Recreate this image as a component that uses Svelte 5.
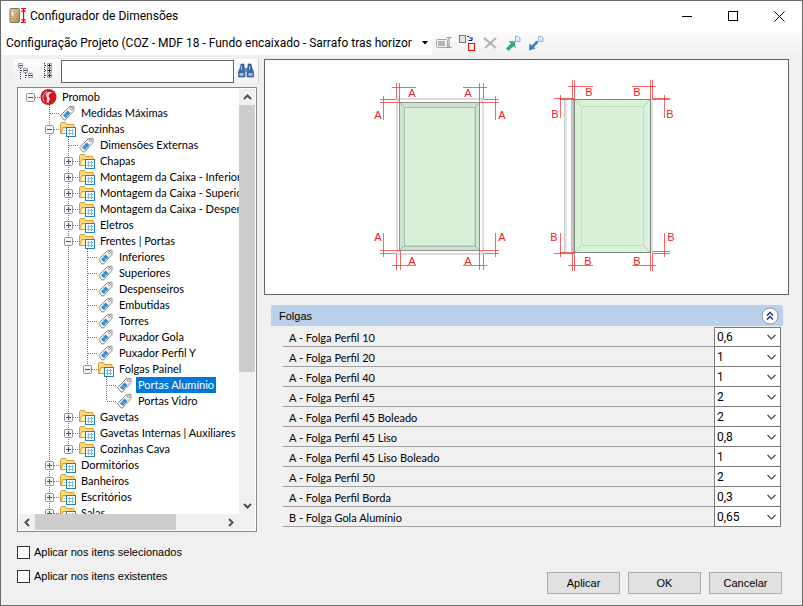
<script lang="ts">
  type Item = {
    depth: number;
    icon: 'root' | 'folder' | 'tag';
    label: string;
    open?: boolean;
  };

  const items: Item[] = [
    { depth: 0, icon: 'root', label: 'Promob', open: true },
    { depth: 1, icon: 'tag', label: 'Medidas Máximas' },
    { depth: 1, icon: 'folder', label: 'Cozinhas', open: true },
    { depth: 2, icon: 'tag', label: 'Dimensões Externas' },
    { depth: 2, icon: 'folder', label: 'Chapas', open: false },
    { depth: 2, icon: 'folder', label: 'Montagem da Caixa - Inferior', open: false },
    { depth: 2, icon: 'folder', label: 'Montagem da Caixa - Superior', open: false },
    { depth: 2, icon: 'folder', label: 'Montagem da Caixa - Despenseiro', open: false },
    { depth: 2, icon: 'folder', label: 'Eletros', open: false },
    { depth: 2, icon: 'folder', label: 'Frentes | Portas', open: true },
    { depth: 3, icon: 'tag', label: 'Inferiores' },
    { depth: 3, icon: 'tag', label: 'Superiores' },
    { depth: 3, icon: 'tag', label: 'Despenseiros' },
    { depth: 3, icon: 'tag', label: 'Embutidas' },
    { depth: 3, icon: 'tag', label: 'Torres' },
    { depth: 3, icon: 'tag', label: 'Puxador Gola' },
    { depth: 3, icon: 'tag', label: 'Puxador Perfil Y' },
    { depth: 3, icon: 'folder', label: 'Folgas Painel', open: true },
    { depth: 4, icon: 'tag', label: 'Portas Alumínio' },
    { depth: 4, icon: 'tag', label: 'Portas Vidro' },
    { depth: 2, icon: 'folder', label: 'Gavetas', open: false },
    { depth: 2, icon: 'folder', label: 'Gavetas Internas | Auxiliares', open: false },
    { depth: 2, icon: 'folder', label: 'Cozinhas Cava', open: false },
    { depth: 1, icon: 'folder', label: 'Dormitórios', open: false },
    { depth: 1, icon: 'folder', label: 'Banheiros', open: false },
    { depth: 1, icon: 'folder', label: 'Escritórios', open: false },
    { depth: 1, icon: 'folder', label: 'Salas', open: false },
    { depth: 1, icon: 'folder', label: 'Lavanderias', open: false }
  ];

  const gaps = [
    { label: 'A - Folga Perfil 10', value: '0,6' },
    { label: 'A - Folga Perfil 20', value: '1' },
    { label: 'A - Folga Perfil 40', value: '1' },
    { label: 'A - Folga Perfil 45', value: '2' },
    { label: 'A - Folga Perfil 45 Boleado', value: '2' },
    { label: 'A - Folga Perfil 45 Liso', value: '0,8' },
    { label: 'A - Folga Perfil 45 Liso Boleado', value: '1' },
    { label: 'A - Folga Perfil 50', value: '2' },
    { label: 'A - Folga Perfil Borda', value: '0,3' },
    { label: 'B - Folga Gola Alumínio', value: '0,65' }
  ];

  const marksA = [[412, 97], [468, 97], [378, 119], [502, 119], [378, 241], [502, 241], [412, 265], [468, 265]];
  const marksB = [[589, 96], [637, 96], [555, 118], [670, 118], [554, 241], [671, 241], [588, 265], [637, 265]];

  let selected = $state('Portas Alumínio');
  let collapsed = $state(false);

  // is there a later sibling on this level, so the guide line goes on?
  function continues(index: number, depth: number) {
    for (let i = index + 1; i < items.length; i++) {
      if (items[i].depth < depth) return false;
      if (items[i].depth === depth) return true;
    }
    return false;
  }
</script>

<div class="window">
  <header class="titlebar">
    <svg class="app-icon" width="18" height="18" viewBox="0 0 18 18">
      <defs>
        <linearGradient id="wood" x1="0" y1="0" x2="1" y2="1">
          <stop offset="0" stop-color="#e6d0ae" />
          <stop offset="1" stop-color="#ad8452" />
        </linearGradient>
      </defs>
      <rect x="1" y="1.5" width="9.5" height="14" rx="1" fill="url(#wood)" stroke="#8e714a" />
      <path d="M3.5 5v4" stroke="#f4f4f4" stroke-width="1.5" />
      <path d="M12 1.5h5M12 15.500h5M14.500 2v13M12.500 5l2-2.500 2 2.500M12.500 12l2 2.500 2-2.500" fill="none" stroke="#d8131f" stroke-width="1.200" />
    </svg>
    <h1>Configurador de Dimensões</h1>
    <div class="caption">
      <button aria-label="Minimizar"><svg width="11" height="11"><path d="M0 5.500h10" stroke="#000" /></svg></button>
      <button aria-label="Maximizar"><svg width="11" height="11"><rect x="0.500" y="0.500" width="9" height="9" fill="none" stroke="#000" /></svg></button>
      <button aria-label="Fechar"><svg width="11" height="11"><path d="M0.500 0.500l10 10M10.500 0.500l-10 10" stroke="#000" /></svg></button>
    </div>
  </header>

  <div class="toolbar">
    <div class="project">
      <select aria-label="Configuração">
        <option>Configuração Projeto (COZ - MDF 18 - Fundo encaixado - Sarrafo tras horizontal)</option>
      </select>
      <svg width="7" height="4" viewBox="0 0 7 4"><path d="M0 0h6L3 3.500z" fill="#000" /></svg>
    </div>
    <button aria-label="Renomear">
      <svg width="16" height="16" viewBox="0 0 16 16" fill="none" stroke="#a6a6a6">
        <rect x="0.500" y="4.500" width="11" height="8" rx="1" fill="#f2f2f2" />
        <rect x="2" y="6" width="7" height="5" fill="#b4b4b4" stroke="none" />
        <path d="M10.500 2.500h2l.5 1 .5-1h2M13 3v9M10.500 12.500h2l.5-1 .5 1h2" stroke="#8e8e8e" />
      </svg>
    </button>
    <button aria-label="Duplicar">
      <svg width="16" height="16" viewBox="0 0 16 16" fill="none">
        <rect x="0.500" y="0.500" width="6" height="7" fill="#e4e4e4" stroke="#777" />
        <path d="M8 1.500h2l3 3M13 2v3.500h-3.500" stroke="#16167c" />
        <rect x="9.500" y="8.500" width="6" height="7" fill="#e9e9e9" stroke="#f00c0c" />
      </svg>
    </button>
    <button aria-label="Excluir">
      <svg width="16" height="16" viewBox="0 0 16 16"><path d="M2 3l12 10M14 3L3 13" stroke="#b4b4b4" stroke-width="2.200" /></svg>
    </button>
    <button aria-label="Exportar">
      <svg width="16" height="16" viewBox="0 0 16 16">
        <path d="M10.500 1.500h3l1.500 1.500v3.500h-4.500z" fill="#e4eefb" stroke="#8fb2dc" />
        <path d="M3.500 6l6.500.5.5 6.500-2-2-5 5L1 13.500l5-5z" fill="#35a77c" />
      </svg>
    </button>
    <button aria-label="Importar">
      <svg width="16" height="16" viewBox="0 0 16 16">
        <path d="M10.500 1.500h3l1.500 1.500v3.500h-4.500z" fill="#e4eefb" stroke="#8fb2dc" />
        <path d="M8.500 5.500l2 2-4.500 4.500 1.500 1.500-6.500 2 .5-7 2.500 2z" fill="#3d7fce" />
      </svg>
    </button>
  </div>

  <main>
    <section class="side">
      <div class="search">
        <button aria-label="Recolher tudo">
          <svg width="16" height="16" viewBox="0 0 16 16" fill="none">
            <path d="M2.500 5v11M7.500 10v6M3 7.500h3M8 12.500h3" stroke="#333" stroke-dasharray="1 1" />
            <path d="M0.500 0.500h4v4h-4zM5.500 5.500h4v4h-4zM10.500 10.500h4v4h-4z" fill="#fff" stroke="#9aa0a8" />
            <path d="M1 2.500h3M6 7.500h3M11 12.500h3" stroke="#2c4270" />
          </svg>
        </button>
        <button aria-label="Expandir tudo">
          <svg width="16" height="16" viewBox="0 0 16 16" fill="none">
            <path d="M3.500 0v16M4 2.500h3M4 7.500h3M4 12.500h3" stroke="#333" stroke-dasharray="1 1" />
            <path d="M6.500 0.500h4v4h-4zM6.500 5.500h4v4h-4zM6.500 10.500h4v4h-4z" fill="#fff" stroke="#9aa0a8" />
            <path d="M7 2.500h3M7 7.500h3M7 12.500h3M8.500 1v3M8.500 6v3M8.500 11v3" stroke="#222" />
          </svg>
        </button>
        <input type="text" aria-label="Localizar" />
        <button class="find" aria-label="Procurar">
          <svg width="16" height="16" viewBox="0 0 16 16">
            <path d="M3 1h3v3l1 2v8H0.500v-5L2.500 4zM10 1h3l.5 3 2 5v5H9V6l1-2z" fill="#3b66a8" stroke="#23477f" stroke-width="0.600" />
            <path d="M6.500 5h3v4h-3z" fill="#5f88c4" />
            <path d="M1.500 10h4v3h-4zM10.500 10h4v3h-4z" fill="#9cbce6" />
            <path d="M3.500 3v4M11.500 3v4" stroke="#a9c6ec" />
          </svg>
        </button>
      </div>

      <div class="tree">
        <ul role="tree" aria-label="Dimensões">
          {#each items as item, i}
            <li role="treeitem" aria-selected={item.label === selected}>
              {#each Array(item.depth + 1) as _, level}
                {@const own = level === item.depth}
                {@const more = continues(i, level)}
                <svg class="cell" width="19" height="16" viewBox="0 0 19 16">
                  {#if more}
                    <path class="guide" d="M9.500 0v16" />
                  {:else if own && level > 0}
                    <path class="guide" d="M9.500 0v8" />
                  {/if}
                  {#if own}
                    <path class="guide" d="M10 8.500h9" />
                  {/if}
                  {#if own && item.open !== undefined}
                    <rect x="5.500" y="4.500" width="8" height="8" rx="1" fill="#f6f6f6" stroke="#919191" />
                    <path d={item.open ? 'M7 8.500h5' : 'M7 8.500h5M9.500 6v5'} stroke="#34549a" />
                  {/if}
                </svg>
              {/each}
              {#if item.icon === 'root'}
                <svg width="18" height="16" viewBox="0 0 18 16">
                  <circle cx="8.500" cy="8" r="8" fill="#d4141e" />
                  <path d="M4.500 12.500C1.500 9 3 4 7 2.500" fill="none" stroke="#f0b4b6" />
                  <path d="M5.500 6C6 3 10 2 12.500 4l-3 .5-1 3 1.500 2-1.500 4.500-2-.5.5-4.500z" fill="#f8e4e4" />
                </svg>
              {:else if item.icon === 'folder'}
                <svg width="18" height="16" viewBox="0 0 18 16">
                  <path d="M1.500 12.500v-10l1-1h4l1.500 2h7v9z" fill="#f9d983" stroke="#d79a34" />
                  <path d="M1.500 12.500l2.500-6h5v6z" fill="#fdeeb8" stroke="#d79a34" />
                  <rect x="7.500" y="6.500" width="9" height="9" fill="#fff" stroke="#1b82bd" />
                  <path d="M9 9.500h6M9 12.500h6M10.500 8v6M13.500 8v6" stroke="#8fb7d6" />
                </svg>
              {:else}
                <svg width="18" height="16" viewBox="0 0 18 16">
                  <path d="M1.500 10.500l8.500-8.500 4.500-1 .5.500v4l-8.500 9.500h-1.500z" fill="#f3f3f3" stroke="#8b8b8b" />
                  <path d="M4 10.500l4.500-5 3 2.500-4.500 5z" fill="#2f8fd0" />
                  <path d="M6 8.500l3 2.500" stroke="#86c0e8" stroke-width="0.800" />
                  <circle cx="12.500" cy="3.500" r="1.200" fill="#fff" stroke="#777" stroke-width="0.800" />
                </svg>
              {/if}
              <button class="label" class:selected={item.label === selected} onclick={() => (selected = item.label)}>
                {item.label}
              </button>
            </li>
          {/each}
        </ul>
        <div class="bar vertical">
          <button aria-label="Para cima"><svg width="9" height="6"><path d="M1 5l3.500-3.500L8 5" /></svg></button>
          <div class="track"><div class="thumb"></div></div>
          <button aria-label="Para baixo"><svg width="9" height="6"><path d="M1 1l3.500 3.500L8 1" /></svg></button>
        </div>
        <div class="bar horizontal">
          <button aria-label="Para a esquerda"><svg width="6" height="9"><path d="M5 1L1.500 4.500 5 8" /></svg></button>
          <div class="track"><div class="thumb"></div></div>
          <button aria-label="Para a direita"><svg width="6" height="9"><path d="M1 1l3.500 3.500L1 8" /></svg></button>
        </div>
        <div class="corner"></div>
      </div>

      <div class="checks">
        <label><input type="checkbox" />Aplicar nos itens selecionados</label>
        <label><input type="checkbox" />Aplicar nos itens existentes</label>
      </div>
    </section>

    <section class="content">
      <div class="preview">
        <svg width="100%" height="234" viewBox="265 60 523 234" fill="none">
          <rect x="397" y="99" width="86" height="155" stroke="#dcdcdc" stroke-width="2" />
          <path d="M396 98l4 4M484 98l-4 4M396 255l4-4M484 255l-4-4" stroke="#ccc" />
          <rect x="399.500" y="102.500" width="80" height="148" fill="#cde5cf" stroke="#8d918d" />
          <rect x="404.500" y="107.500" width="71" height="139" fill="#d9f0d9" stroke="#a9bfab" />
          <path d="M474.500 108v138M405 245.500h69" stroke="#c0d6c1" />
          <path d="M400 103l5 5M479 103l-5 5M400 250l5-5M479 250l-5-5" stroke="#a4b5a5" />

          <path d="M564.500 98v155M571.500 98v155" stroke="#c8c8c8" />
          <path d="M566 98v155" stroke="#e6e6e6" stroke-width="2" />
          <path d="M573 98v155" stroke="#bcbcbc" stroke-width="2" />
          <path d="M652 98v155" stroke="#e2e2e2" stroke-width="2" />
          <rect x="574.500" y="99.500" width="76" height="153" fill="#d9f0d9" stroke="#7e857e" />
          <rect x="581.500" y="106.500" width="62" height="139" stroke="#c3dcc4" />
          <path d="M575 100l6 6M650 100l-6 6M575 252l6-6M650 252l-6-6" stroke="#b9d0ba" />

          <g class="measure">
            <path d="M396.500 83v16M399.500 83v19M392 87.500h24M479.500 83v19M483.500 83v16M463 87.500h24" />
            <path d="M380 99.500h16M380 102.500h20M383.500 96v24M484 99.500h15M480 102.500h19M495.500 96v24" />
            <path d="M380 250.500h20M380 253.500h16M383.500 233v24M480 250.500h19M484 253.500h15M495.500 233v24" />
            <path d="M396.500 254v16M400.500 251v19M392 265.500h24M479.500 251v19M483.500 254v16M463 265.500h24" />
            <path d="M572.500 80v18M574.500 80v19M568 86.500h25M650.500 80v19M652.500 80v18M632 86.500h24" />
            <path d="M554 98.500h20M560 99.500h14M560.500 95v23M652 98.500h18M652 99.500h18M664.500 95v23" />
            <path d="M554 253.500h20M560 252.500h14M560.500 233v24M652 251.500h18M652 253.500h18M664.500 233v24" />
            <path d="M572.500 253v18M574.500 253v18M568 265.500h25M650.500 253v18M652.500 253v18M632 265.500h24" />
          </g>
          {#each marksA as [x, y]}
            <text {x} {y}>A</text>
          {/each}
          {#each marksB as [x, y]}
            <text {x} {y}>B</text>
          {/each}
        </svg>
      </div>

      <div class="group">
        <h2>Folgas</h2>
        <button aria-label="Recolher grupo" onclick={() => (collapsed = !collapsed)}>
          <svg width="18" height="18" viewBox="0 0 18 18" fill="none">
            <circle cx="9" cy="9" r="8" fill="#fdfdfe" stroke="#8e97ac" />
            <path d="M6 8.500l3-3 3 3M6 12.500l3-3 3 3" stroke="#1d2c66" stroke-width="1.400" />
          </svg>
        </button>
      </div>
      {#if !collapsed}
        <div class="fields">
          {#each gaps as gap, i}
            <div class="field">
              <label for="gap-{i}">{gap.label}</label>
              <div class="combo">
                <select id="gap-{i}"><option>{gap.value}</option></select>
                <svg width="9" height="6"><path d="M0.500 1l4 4 4-4" fill="none" stroke="#444" stroke-width="1.200" /></svg>
              </div>
            </div>
          {/each}
        </div>
      {/if}

      <div class="actions">
        <button>Aplicar</button>
        <button>OK</button>
        <button>Cancelar</button>
      </div>
    </section>
  </main>
</div>

<style>
  :global(body) {
    margin: 0;
  }

  .window {
    box-sizing: border-box;
    display: flex;
    flex-direction: column;
    height: 100vh;
    border: 1px solid #6b6b6b;
    background: #f0f0f0;
    color: #000;
    font-family: "Liberation Sans", Arial, sans-serif;
    font-size: 11px;
  }

  button,
  select,
  input {
    margin: 0;
    padding: 0;
    font: inherit;
    color: inherit;
  }

  button {
    display: flex;
    align-items: center;
    justify-content: center;
    border: 0;
    background: none;
  }

  svg {
    display: block;
    flex-shrink: 0;
  }

  select {
    appearance: none;
    border: 0;
    border-radius: 0;
    background: none;
    outline: none;
  }

  /* title bar */
  .titlebar {
    display: flex;
    align-items: center;
    height: 30px;
    padding-left: 8px;
    background: #fff;
  }

  h1 {
    flex: 1;
    margin: 0 0 0 3px;
    font-family: Roboto, sans-serif;
    font-size: 12px;
    font-weight: 400;
  }

  .caption {
    display: flex;
  }

  .caption button {
    width: 46px;
    height: 30px;
  }

  /* toolbar */
  .toolbar {
    display: flex;
    height: 24px;
    padding-left: 1px;
    background: linear-gradient(#fcfcfc, #f0f0f0);
  }

  .toolbar > button {
    width: 23px;
  }

  .project {
    display: flex;
    align-items: center;
    width: 430px;
    background: #fff;
    font-family: Roboto, sans-serif;
    font-size: 12px;
  }

  .project select {
    flex: 1;
    min-width: 0;
    height: 24px;
    margin-left: 4px;
    overflow: hidden;
    text-overflow: clip;
  }

  .project svg {
    margin: 0 3px 0 10px;
  }

  main {
    display: flex;
    flex: 1;
    gap: 5px;
    min-height: 0;
    padding: 4px 13px 11px;
  }

  /* left side */
  .side {
    display: flex;
    flex-direction: column;
    width: 245px;
  }

  .search {
    display: flex;
    align-items: center;
    height: 24px;
    border-right: 1px solid #d0d0d0;
    background: linear-gradient(#fdfdfd, #f2f2f2);
  }

  .search button {
    width: 23px;
    height: 22px;
  }

  .search input {
    box-sizing: border-box;
    flex: 1;
    min-width: 0;
    height: 23px;
    margin-left: 1px;
    border: 1px solid #646464;
    background: #fff;
  }

  .search .find {
    width: 24px;
  }

  .tree {
    display: grid;
    flex: 1;
    grid-template: minmax(0, 1fr) 16px / minmax(0, 1fr) 16px;
    min-height: 0;
    margin: 4px 2px 0 3px;
    padding: 1px;
    border: 1px solid #828790;
    background: #fff;
  }

  ul {
    margin: 0;
    padding: 0 0 0 2px;
    overflow: hidden;
    list-style: none;
  }

  li {
    display: flex;
    height: 16px;
    white-space: nowrap;
  }

  .guide {
    stroke: #777;
    stroke-dasharray: 1 1;
  }

  .label {
    margin-left: 2px;
    padding: 0 2px;
    font-family: Lato, sans-serif;
    line-height: 16px;
  }

  .label.selected {
    background: #0078d7;
    color: #fff;
  }

  .bar,
  .corner {
    display: flex;
    background: #f0f0f0;
  }

  .bar button {
    flex-shrink: 0;
    width: 16px;
    height: 16px;
  }

  .bar path {
    fill: none;
    stroke: #505050;
    stroke-width: 2;
  }

  .bar .track {
    flex: 1;
  }

  .thumb {
    background: #cdcdcd;
  }

  .vertical {
    flex-direction: column;
  }

  .vertical .thumb {
    height: 68%;
  }

  .horizontal .track {
    display: flex;
  }

  .horizontal .thumb {
    width: 75%;
  }

  .checks {
    display: flex;
    flex-direction: column;
    gap: 10px;
    padding: 13px 3px 11px;
  }

  .checks label {
    display: flex;
    align-items: center;
    gap: 4px;
    line-height: 14px;
  }

  .checks input {
    appearance: none;
    box-sizing: border-box;
    width: 13px;
    height: 13px;
    border: 1px solid #333;
    background: #fff;
  }

  /* right side */
  .content {
    display: flex;
    flex: 1;
    flex-direction: column;
    min-width: 0;
  }

  .preview {
    border: 1px solid #646464;
    background: #fff;
  }

  .measure {
    stroke: #ee2a2a;
    stroke-opacity: 0.7;
  }

  text {
    fill: #e8252a;
    font-size: 11px;
    text-anchor: middle;
  }

  .group {
    display: flex;
    align-items: center;
    justify-content: space-between;
    height: 21px;
    margin: 10px 6px 0 7px;
    padding: 0 4px 0 8px;
    border-radius: 4px 4px 0 0;
    background: #b9d1ea;
  }

  h2 {
    margin: 0;
    font-size: 11px;
    font-weight: 400;
  }

  .fields {
    margin: 1px 8px 0 19px;
    font-family: Lato, sans-serif;
  }

  .field {
    display: flex;
    height: 20px;
  }

  .field label {
    flex: 1;
    padding-left: 6px;
    border-bottom: 1px solid #a0a0a0;
    line-height: 22px;
  }

  .combo {
    box-sizing: border-box;
    display: grid;
    align-items: center;
    width: 67px;
    border: solid #7a7a7a;
    border-width: 0 1px 1px;
    background: #fff;
    font-family: Roboto, sans-serif;
  }

  .field:first-child .combo {
    border-top-width: 1px;
  }

  .combo select,
  .combo svg {
    grid-area: 1 / 1;
  }

  .combo select {
    padding-left: 2px;
    font-size: 12px;
  }

  .combo svg {
    justify-self: end;
    margin-right: 4px;
    pointer-events: none;
  }

  .actions {
    display: flex;
    gap: 8px;
    justify-content: flex-end;
    margin-top: auto;
    padding-right: 7px;
  }

  .actions button {
    box-sizing: border-box;
    width: 73px;
    height: 22px;
    border: 1px solid #adadad;
    background: #e1e1e1;
  }
</style>
